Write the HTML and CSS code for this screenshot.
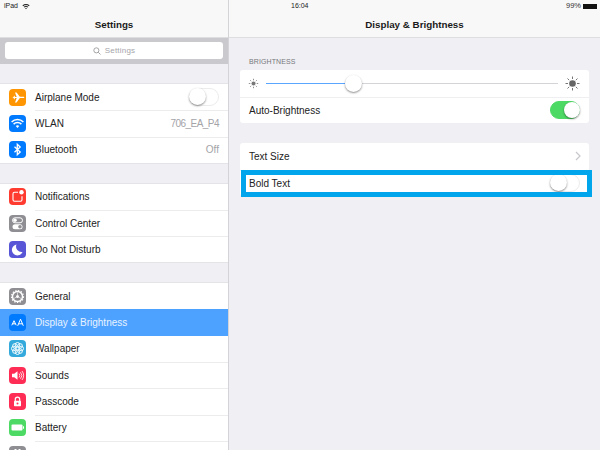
FILE: index.html
```html
<!DOCTYPE html>
<html lang="en">
<head>
<meta charset="utf-8">
<title>Display &amp; Brightness</title>
<link rel="stylesheet" href="styles.css">
</head>
<body>
<div class="screen">
  <aside class="master">
    <header class="bar">
      <div class="status">
        <span>iPad</span>
        <svg class="wifi-small" viewBox="0 0 10 8"><path d="M0.5 2.8a6.4 6.4 0 0 1 9 0L8.6 3.8a5.1 5.1 0 0 0-7.2 0zM2.2 4.5a4 4 0 0 1 5.6 0L6.9 5.4a2.7 2.7 0 0 0-3.8 0zM3.9 6.2a1.6 1.6 0 0 1 2.2 0L5 7.4z" fill="#222"/></svg>
      </div>
      <div class="title">Settings</div>
    </header>
    <div class="searchband">
      <div class="search">
        <svg class="lens" viewBox="0 0 10 10"><circle cx="4.2" cy="4.2" r="3.2" fill="none" stroke="#8e8e93"/><path d="M6.6 6.6L9.4 9.4" stroke="#8e8e93"/></svg>
        <span>Settings</span>
      </div>
    </div>
    <div class="list">
      <ul class="group">
        <li class="row"><span class="ic orange"><svg viewBox="0 0 17 17"><path d="M2.5 8.5L4 8.5 5.5 10.2H6.2L5.6 8.9 7.7 8.9 6 13.5H7.6L10.8 9.1 14 9.1C15 9.1 15.3 8.7 15.3 8.4S15 7.7 14 7.7L10.8 7.7 7.6 3.5H6L7.7 7.9 5.6 7.9 6.2 6.8H5.5L4 8.3z" fill="#fff"/></svg></span><span class="label">Airplane Mode</span><span class="switch"><i class="knob"></i></span></li>
        <li class="row"><span class="ic blue"><svg viewBox="0 0 17 17"><path d="M2.6 7a8.4 8.4 0 0 1 11.8 0M4.6 9.1a5.6 5.6 0 0 1 7.8 0" fill="none" stroke="#fff" stroke-width="1.5"/><path d="M6.7 11a2.8 2.8 0 0 1 3.6 0L8.5 13z" fill="#fff"/></svg></span><span class="label">WLAN</span><span class="value ssid">706_EA_P4</span></li>
        <li class="row"><span class="ic blue"><svg viewBox="0 0 17 17"><path d="M5.5 5.8L11.2 11 8.3 13.8V3.2L11.2 6 5.5 11.2" fill="none" stroke="#fff" stroke-width="1.3"/></svg></span><span class="label">Bluetooth</span><span class="value">Off</span></li>
      </ul>
      <ul class="group">
        <li class="row"><span class="ic red"><svg viewBox="0 0 17 17"><path d="M9 4.3H5.5A1.5 1.5 0 0 0 4 5.8v6a1.5 1.5 0 0 0 1.5 1.5h6a1.5 1.5 0 0 0 1.5-1.5V8.3" fill="none" stroke="#fff" stroke-width="1.1"/><circle cx="12.5" cy="4.2" r="2.2" fill="#fff"/></svg></span><span class="label">Notifications</span></li>
        <li class="row"><span class="ic gray"><svg viewBox="0 0 17 17"><rect x="3.5" y="2.8" width="10" height="5" rx="2.5" fill="none" stroke="#fff"/><circle cx="6" cy="5.3" r="1.8" fill="#fff"/><rect x="3.5" y="9.2" width="10" height="5" rx="2.5" fill="#fff"/><circle cx="11" cy="11.7" r="1.8" fill="#8e8e93"/></svg></span><span class="label">Control Center</span></li>
        <li class="row"><span class="ic indigo"><svg viewBox="0 0 17 17"><path d="M7.5 3.5a5.5 5.5 0 1 0 6 7.5 5.5 5.5 0 0 1-6-7.5z" fill="#fff"/></svg></span><span class="label">Do Not Disturb</span></li>
      </ul>
      <ul class="group">
        <li class="row"><span class="ic gray"><svg viewBox="0 0 17 17"><circle cx="8.5" cy="8.5" r="5" fill="none" stroke="#fff" stroke-width="1.4"/><circle cx="8.5" cy="8.5" r="6" fill="none" stroke="#fff" stroke-width="1.2" stroke-dasharray="1.4 1.4"/><circle cx="8.5" cy="8.5" r="1.5" fill="#fff"/><path d="M8.5 4.5V7M5 10.5L7 9.2M12 10.5L10 9.2" stroke="#fff" stroke-width=".6"/></svg></span><span class="label">General</span></li>
        <li class="row selected"><span class="ic blue"><svg viewBox="0 0 17 17"><path d="M2.8 11.3L5 6.7 7.2 11.3M3.7 9.8H6.3M8.7 11.8L11.5 5.2 14.3 11.8M9.7 9.8H13.3" fill="none" stroke="#fff" stroke-width="1"/></svg></span><span class="label">Display &amp; Brightness</span></li>
        <li class="row"><span class="ic cyan"><svg viewBox="0 0 17 17"><g fill="none" stroke="#fff" stroke-width=".9"><circle cx="8.5" cy="4.8" r="2.3"/><circle cx="8.5" cy="12.2" r="2.3"/><circle cx="4.8" cy="8.5" r="2.3"/><circle cx="12.2" cy="8.5" r="2.3"/><circle cx="5.9" cy="5.9" r="2.3"/><circle cx="11.1" cy="5.9" r="2.3"/><circle cx="5.9" cy="11.1" r="2.3"/><circle cx="11.1" cy="11.1" r="2.3"/></g></svg></span><span class="label">Wallpaper</span></li>
        <li class="row"><span class="ic pink"><svg viewBox="0 0 17 17"><path d="M3 6.8H5.2L8.5 4.3V12.7L5.2 10.2H3z" fill="#fff"/><path d="M10 6.5a3 3 0 0 1 0 4M11.5 5.2a5 5 0 0 1 0 6.6M13 4a7 7 0 0 1 0 9" fill="none" stroke="#fff" stroke-width=".8"/></svg></span><span class="label">Sounds</span></li>
        <li class="row"><span class="ic pink"><svg viewBox="0 0 17 17"><path d="M6.3 8V6.3a2.2 2.2 0 0 1 4.4 0V8" fill="none" stroke="#fff" stroke-width="1.2"/><rect x="5" y="7.8" width="7" height="5.5" rx=".8" fill="#fff"/><circle cx="8.5" cy="10.5" r="1" fill="#ff2d55"/></svg></span><span class="label">Passcode</span></li>
        <li class="row"><span class="ic green"><svg viewBox="0 0 17 17"><rect x="2.5" y="5.5" width="11" height="6" rx="1" fill="#fff"/><rect x="14" y="7.3" width="1" height="2.4" fill="#fff"/></svg></span><span class="label">Battery</span></li>
        <li class="row"><span class="ic gray"><svg viewBox="0 0 17 17"><rect x="5.5" y="3" width="2" height="4" fill="#fff"/><rect x="9.5" y="3" width="2" height="4" fill="#fff"/></svg></span></li>
      </ul>
    </div>
  </aside>
  <main class="detail">
    <header class="bar">
      <div class="status detail-status">
        <span class="clock">16:04</span>
        <span class="batt">99%<i class="battery"></i></span>
      </div>
      <div class="title">Display &amp; Brightness</div>
    </header>
    <div class="content">
      <h2 class="caption">BRIGHTNESS</h2>
      <div class="card">
        <div class="crow slider-row">
          <svg class="sun small" viewBox="0 0 11 11"><circle cx="5.5" cy="5.5" r="2" fill="#777"/><path d="M5.5 .8V2.3M5.5 8.7V10.2M.8 5.5H2.3M8.7 5.5H10.2M2.2 2.2L3.2 3.2M7.8 7.8L8.8 8.8M2.2 8.8L3.2 7.8M7.8 3.2L8.8 2.2" stroke="#777" stroke-width=".8"/></svg>
          <div class="track"><i class="fill"></i><i class="knob thumb"></i></div>
          <svg class="sun large" viewBox="0 0 15 15"><circle cx="7.5" cy="7.5" r="3.3" fill="#666"/><path d="M7.5 .5V3M7.5 12V14.5M.5 7.5H3M12 7.5H14.5M2.5 2.5L4.2 4.2M10.8 10.8L12.5 12.5M2.5 12.5L4.2 10.8M10.8 4.2L12.5 2.5" stroke="#666" stroke-width=".9"/></svg>
        </div>
        <div class="crow"><span class="label">Auto-Brightness</span><span class="switch on"><i class="knob"></i></span></div>
      </div>
      <div class="card second">
        <div class="crow"><span class="label">Text Size</span><svg class="chev" viewBox="0 0 6 10"><path d="M1 1L5 5 1 9" fill="none" stroke="#c7c7cc" stroke-width="1.2"/></svg></div>
        <div class="crow"><span class="label">Bold Text</span><span class="switch"><i class="knob"></i></span></div>
        <div class="callout"></div>
      </div>
    </div>
  </main>
</div>
</body>
</html>
```
FILE: styles.css
```css
* { box-sizing: border-box; margin: 0; padding: 0; }
html, body { width: 600px; height: 450px; overflow: hidden; }
body { font-family: "Liberation Sans", Arial, sans-serif; color: #222; background: #efeff4; }
.screen { display: flex; width: 600px; height: 450px; }
.master { width: 229px; flex: none; border-right: 1px solid #d4d4d8; overflow: hidden; }
.detail { flex: 1; min-width: 0; }
.bar { height: 38px; background: #f8f8f8; border-bottom: 1px solid #dedee0; }
.status { height: 12px; padding: 0 0 0 4px; display: flex; align-items: center; gap: 4px; font-size: 7px; line-height: 12px; }
.wifi-small { width: 8px; height: 7px; }
.title { text-align: center; font-size: 9.8px; font-weight: 700; line-height: 14px; margin-top: 6px; color: #1a1a1a; }
.searchband { height: 26px; background: #c9c9ce; padding: 4px 5px 5px; }
.search { height: 17px; background: #fff; border-radius: 3px; display: flex; align-items: center; justify-content: center; gap: 4px; font-size: 8px; color: #a5a5aa; letter-spacing: .2px; }
.lens { width: 8px; height: 8px; }
.list { padding-top: 19px; }
.group { list-style: none; background: #fff; margin-bottom: 18.7px; border-top: 1px solid #e4e4e8; border-bottom: 1px solid #e4e4e8; }
.row { height: 26.3px; display: flex; align-items: center; padding: 0 9px; font-size: 10px; position: relative; }
.row + .row::before { content: ""; position: absolute; left: 35px; right: 0; top: 0; height: 1px; background: #ececee; }
.ic { width: 17px; height: 17px; border-radius: 4px; flex: none; margin-right: 9px; display: flex; }
.ic svg { width: 17px; height: 17px; }
.orange { background: #ff9500; }
.blue { background: #007aff; }
.red { background: #ff3b30; }
.gray { background: #8e8e93; }
.indigo { background: #5856d6; }
.cyan { background: #34aadc; }
.pink { background: #ff2d55; }
.green { background: #4cd964; }
.label { flex: 1; white-space: nowrap; }
.value { color: #a3a3a8; }
.ssid { letter-spacing: -.55px; }
.selected { background: #4ea2ff; color: #e8f2ff; }
.selected::before { display: none; }
.selected + .row::before { display: none; }
.switch { width: 30px; height: 18px; border-radius: 9px; border: 1px solid #ececec; background: #fff; position: relative; flex: none; }
.knob { display: block; position: absolute; left: -1px; top: -1px; width: 17px; height: 17px; border-radius: 50%; background: #fff; box-shadow: 0 1px 2px rgba(0,0,0,.45); }
.switch.on { background: #4cd964; border-color: #4cd964; }
.switch.on .knob { left: auto; right: -1px; top: 0; width: 16px; height: 16px; }
.detail-status { justify-content: space-between; padding: 0 3px 0 62px; }
.clock { font-size: 7px; }
.batt { display: flex; align-items: center; gap: 2px; color: #333; font-size: 7.5px; }
.battery { width: 14px; height: 5px; background: #111; }
.content { padding: 17px 11px 0 11px; }
.caption { font-size: 7px; font-weight: 400; color: #77777c; line-height: 14px; padding: 0 9px; height: 15px; letter-spacing: .1px; }
.card { background: #fff; border-radius: 3px; position: relative; }
.second { margin-top: 20px; }
.crow { height: 26.5px; display: flex; align-items: center; padding: 0 9px; font-size: 10px; }
.crow + .crow { border-top: 1px solid #efeff1; }
.slider-row { gap: 7px; }
.sun.small { width: 11px; height: 11px; margin-left: -1px; }
.sun.large { width: 15px; height: 15px; }
.track { flex: 1; height: 1px; background: #d4d4d8; position: relative; }
.fill { position: absolute; left: 0; top: 0; width: 79px; height: 1px; background: #5aa5ff; }
.thumb { left: 79px; top: -8px; }
.chev { width: 6px; height: 10px; margin-right: -1px; }
.callout { position: absolute; left: 1px; right: -3px; top: 27px; height: 27px; border: 5px solid #00a5ec; }
```
